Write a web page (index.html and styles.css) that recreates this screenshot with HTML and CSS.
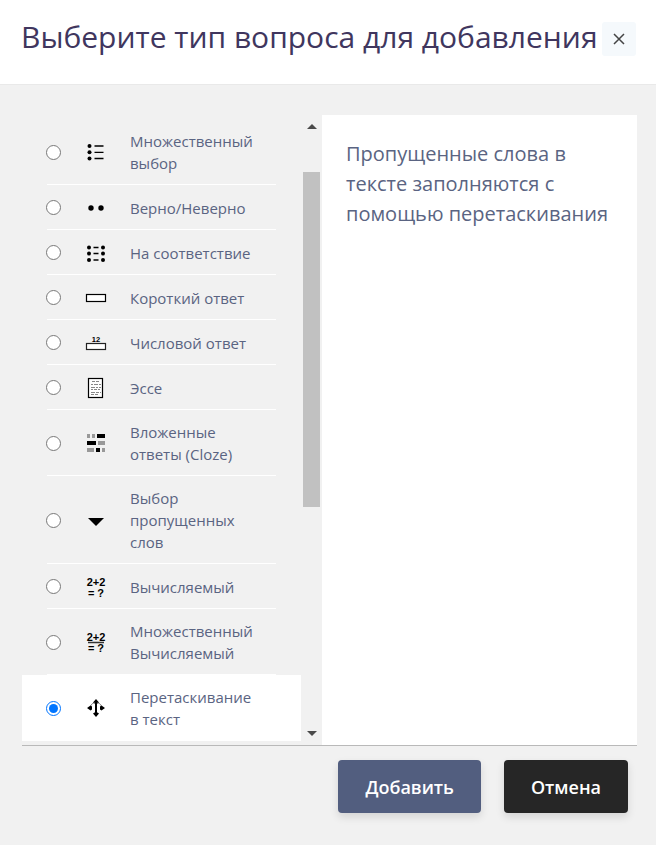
FILE: index.html
```html
<!DOCTYPE html>
<html lang="ru">
<head>
<meta charset="utf-8">
<meta name="viewport" content="width=device-width, initial-scale=1">
<title>Выберите тип вопроса для добавления</title>
<link rel="stylesheet" href="styles.css">
</head>
<body>
<header class="header">
  <h1 class="title">Выберите тип вопроса для добавления</h1>
  <button class="close" type="button" aria-label="Закрыть">
    <svg width="12" height="12" viewBox="0 0 12 12"><path d="M1 1L11 11M11 1L1 11" stroke="#444" stroke-width="1.5" fill="none"/></svg>
  </button>
</header>
<form class="chooser">
  <div class="columns">
    <div class="list">
      <label class="option">
        <span class="row"><input type="radio" name="qtype">
          <svg class="icon" viewBox="0 0 24 24"><circle cx="5.500" cy="6" r="2"/><circle cx="5.500" cy="12.300" r="2"/><circle cx="5.500" cy="18.500" r="2"/><path d="M10.500 6h9M10.500 12.300h9M10.500 18.500h9" stroke="#000" stroke-width="1.300"/></svg>
          <span class="name">Множественный выбор</span></span>
      </label>
      <label class="option">
        <span class="row"><input type="radio" name="qtype">
          <svg class="icon" viewBox="0 0 24 24"><circle cx="7" cy="12" r="2.700"/><circle cx="17" cy="12" r="2.700"/></svg>
          <span class="name">Верно/Неверно</span></span>
      </label>
      <label class="option">
        <span class="row"><input type="radio" name="qtype">
          <svg class="icon" viewBox="0 0 24 24"><circle cx="5" cy="6.500" r="2"/><circle cx="5" cy="12.500" r="2"/><circle cx="5" cy="19" r="2"/><circle cx="19" cy="6.500" r="2"/><circle cx="19" cy="12.500" r="2"/><circle cx="19" cy="19" r="2"/><path d="M9.500 6.500h5M9.500 12.500h5M9.500 19h5" stroke="#000" stroke-width="1.300"/></svg>
          <span class="name">На соответствие</span></span>
      </label>
      <label class="option">
        <span class="row"><input type="radio" name="qtype">
          <svg class="icon" viewBox="0 0 24 24"><rect x="2.500" y="8.500" width="19" height="7" fill="#fff" stroke="#000" stroke-width="1.200"/></svg>
          <span class="name">Короткий ответ</span></span>
      </label>
      <label class="option">
        <span class="row"><input type="radio" name="qtype">
          <svg class="icon" viewBox="0 0 24 24"><rect x="2.500" y="12.500" width="19" height="6" fill="#fff" stroke="#222" stroke-width="1.200"/><text x="12" y="10.500" font-size="7.500" text-anchor="middle">12</text></svg>
          <span class="name">Числовой ответ</span></span>
      </label>
      <label class="option">
        <span class="row"><input type="radio" name="qtype">
          <svg class="icon" viewBox="0 0 24 24"><rect x="4.500" y="2.500" width="14" height="19" fill="#fff" stroke="#000" stroke-width="1.200"/><g stroke="#888" stroke-width="1"><path d="M8 5.500h8" stroke-dasharray="3 1"/><path d="M7 8.500h10" stroke-dasharray="2 1 4 1"/><path d="M7 11.500h10" stroke-dasharray="4 1 2 1"/><path d="M7 13.500h10" stroke-dasharray="2 1 3 1"/><path d="M7 16.500h10" stroke-dasharray="4 1 3 1"/><path d="M7 18.500h8" stroke-dasharray="3 1"/></g></svg>
          <span class="name">Эссе</span></span>
      </label>
      <label class="option">
        <span class="row"><input type="radio" name="qtype">
          <svg class="icon" viewBox="0 0 24 24"><path d="M13 3h8v4h-8zM3 10h9v4h-9zM12 17h4v4h-4z"/><path fill="#999" d="M3 3h3v4h-3zM8 3h3v4h-3zM14 10h7v4h-7zM3 17h7v4h-7zM18 17h3v4h-3z"/></svg>
          <span class="name">Вложенные ответы (Cloze)</span></span>
      </label>
      <label class="option">
        <span class="row"><input type="radio" name="qtype">
          <svg class="icon" viewBox="0 0 24 24"><path d="M4 10h16l-8 8z"/></svg>
          <span class="name">Выбор пропущенных слов</span></span>
      </label>
      <label class="option">
        <span class="row"><input type="radio" name="qtype">
          <svg class="icon" viewBox="0 0 24 24"><text x="12" y="11" font-size="11" text-anchor="middle">2+2</text><text x="12" y="22" font-size="11" text-anchor="middle">= ?</text></svg>
          <span class="name">Вычисляемый</span></span>
      </label>
      <label class="option">
        <span class="row"><input type="radio" name="qtype">
          <svg class="icon" viewBox="0 0 24 24"><text x="12" y="11" font-size="11" text-anchor="middle">2+2</text><path d="M4 12.500h16" stroke="#333" stroke-width="1.500"/><text x="12" y="22" font-size="11" text-anchor="middle">= ?</text></svg>
          <span class="name">Множественный Вычисляемый</span></span>
      </label>
      <label class="option">
        <span class="row"><input type="radio" name="qtype" checked>
          <svg class="icon" viewBox="0 0 24 24"><path d="M12 3l3 3.500-1.500 1h-3l-1.500-1zM12 21l3-3.500-1.500-1h-3l-1.500 1zM3 12l3.500-2.500 1.500 1v3l-1.500 1zM21 12l-3.500-2.500-1.500 1v3l1.500 1z"/><path d="M12 6v12" stroke="#000" stroke-width="2" fill="none"/><path d="M6.500 10C7.500 8 9 7 11 6.500M17.500 10C16.500 8 15 7 13 6.500" stroke="#555" stroke-width=".8" fill="none"/></svg>
          <span class="name">Перетаскивание в текст</span></span>
      </label>
    </div>
    <div class="scrollbar" aria-hidden="true">
      <svg class="arrow" viewBox="0 0 10 5"><path d="M5 0l5 5h-10z"/></svg>
      <div class="track"><div class="thumb"></div></div>
      <svg class="arrow" viewBox="0 0 10 5"><path d="M0 0h10l-5 5z"/></svg>
    </div>
    <div class="description">Пропущенные слова в тексте заполняются с помощью перетаскивания</div>
  </div>
  <div class="actions">
    <button class="btn primary" type="button">Добавить</button>
    <button class="btn dark" type="button">Отмена</button>
  </div>
</form>
</body>
</html>
```
FILE: styles.css
```css
* { box-sizing: border-box; }

body {
  margin: 0;
  min-height: 100vh;
  background: #f1f1f1;
  color: #5a6482;
  font: 15px/22px "Open Sans", "Noto Sans", sans-serif;
}

.header {
  display: flex;
  align-items: flex-start;
  justify-content: space-between;
  padding: 19px 20px 28px 21px;
  background: #fff;
  border-bottom: 1px solid #e9e9e9;
}

.title {
  margin: 0;
  color: #40365e;
  font-size: 30px;
  font-weight: 400;
  line-height: 36px;
  white-space: nowrap;
}

.close {
  display: flex;
  align-items: center;
  justify-content: center;
  flex: none;
  width: 34px;
  height: 34px;
  margin-top: 3px;
  padding: 0;
  border: 0;
  border-radius: 3px;
  background: #f5f9fc;
}

.chooser { padding: 30px 19px 32px 22px; }

.columns {
  display: grid;
  grid-template-columns: minmax(0, 31fr) 17px minmax(0, 35fr);
  column-gap: 2px;
  border-bottom: 1px solid #b9b9b9;
}

.list { padding: 4px 0; }

.option {
  display: block;
  padding: 0 25px;
}

.row {
  display: flex;
  align-items: center;
  min-height: 45px;
  padding: 11px 20px 10px 0;
  border-bottom: 1px solid #fff;
}

.option:has(:checked) { background: #fff; }

.row input {
  flex: none;
  width: 15px;
  height: 15px;
  margin: 0 23px 0 -1px;
}

.icon {
  flex: none;
  width: 24px;
  height: 24px;
  margin: -1px 22px -1px 0;
  font-family: "Liberation Sans", sans-serif;
  font-weight: 700;
}

.scrollbar {
  display: flex;
  flex-direction: column;
  align-items: center;
  padding: 9px 0;
}

.arrow {
  width: 10px;
  height: 5px;
  fill: #4a4a4a;
}

.track {
  flex: 1;
  width: 100%;
  padding-top: 43px;
}

.thumb {
  height: 60%;
  background: #c1c1c1;
}

.description {
  padding: 24px;
  background: #fff;
  font-size: 20px;
  line-height: 30px;
}

.actions {
  display: flex;
  justify-content: flex-end;
  gap: 23px;
  padding: 14px 9px 0 0;
}

.btn {
  height: 53px;
  padding: 0 27px;
  border: 0;
  border-radius: 4px;
  color: #fff;
  font: 600 18px/24px "Open Sans", "Noto Sans", sans-serif;
  box-shadow: 0 4px 8px rgba(0, 0, 0, 0.12);
}

.primary { background: #525e7f; }

.dark { background: #262626; }
```
